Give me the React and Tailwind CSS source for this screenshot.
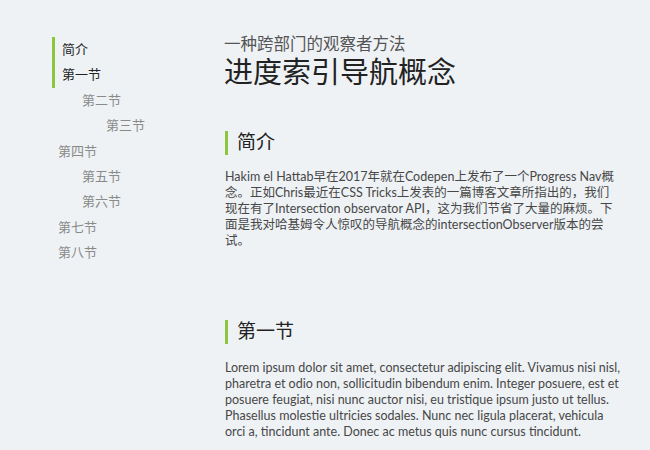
import React from 'react';

const navItems = [
  { label: '简介', level: 0, active: true },
  { label: '第一节', level: 0, active: true },
  { label: '第二节', level: 1 },
  { label: '第三节', level: 2 },
  { label: '第四节', level: 0 },
  { label: '第五节', level: 1 },
  { label: '第六节', level: 1 },
  { label: '第七节', level: 0 },
  { label: '第八节', level: 0 },
];

const introLines = [
  'Hakim el Hattab早在2017年就在Codepen上发布了一个Progress Nav概',
  '念。正如Chris最近在CSS Tricks上发表的一篇博客文章所指出的，我们',
  '现在有了Intersection observator API，这为我们节省了大量的麻烦。下',
  '面是我对哈基姆令人惊叹的导航概念的intersectionObserver版本的尝',
  '试。',
];

const loremLines = [
  'Lorem ipsum dolor sit amet, consectetur adipiscing elit. Vivamus nisi nisl,',
  'pharetra et odio non, sollicitudin bibendum enim. Integer posuere, est et',
  'posuere feugiat, nisi nunc auctor nisi, eu tristique ipsum justo ut tellus.',
  'Phasellus molestie ultricies sodales. Nunc nec ligula placerat, vehicula',
  'orci a, tincidunt ante. Donec ac metus quis nunc cursus tincidunt.',
];

const indent = ['pl-[6px]', 'pl-[30px]', 'pl-[54px]'];

function NavItem({ item }) {
  if (item.active) {
    return (
      <li className="h-[25.4px] leading-[25.4px] border-l-[3px] border-[#8cc63f] pl-[7px] text-[#222]">
        {item.label}
      </li>
    );
  }
  return (
    <li className={`h-[25.4px] leading-[25.4px] text-[#8a8a8a] ${indent[item.level]}`}>
      {item.label}
    </li>
  );
}

function Section({ title, lines, className, gap }) {
  return (
    <section className={className}>
      <h2 className="h-[24px] leading-[24px] border-l-[3px] border-[#8cc63f] pl-[9px] text-[19px] text-[#222] font-['Liberation_Serif','Noto_Sans_CJK_SC',serif]">
        {title}
      </h2>
      <p className={`${gap} text-[12.5px] leading-[16px] text-[#474747]`}>
        {lines.map((line, i) => (
          <span key={i} className="block whitespace-nowrap">
            {line}
          </span>
        ))}
      </p>
    </section>
  );
}

export default function App() {
  return (
    <div className="min-h-screen bg-[#eef2f5] flex pt-[36px] font-['Lato','Noto_Sans_CJK_SC',sans-serif]">
      <nav className="w-[224px] shrink-0 pl-[52px] pt-[1px]">
        <ul className="text-[13px]">
          {navItems.map((item) => (
            <NavItem key={item.label} item={item} />
          ))}
        </ul>
      </nav>
      <main className="flex-1">
        <header className="font-['Liberation_Serif','Noto_Sans_CJK_SC',serif]">
          <div className="text-[16.5px] leading-[18px] text-[#555]">一种跨部门的观察者方法</div>
          <h1 className="mt-[2px] text-[29px] leading-[34px] text-[#222]">进度索引导航概念</h1>
        </header>
        <Section title="简介" lines={introLines} gap="mt-[14px]" className="mt-[41px] ml-[1px]" />
        <Section title="第一节" lines={loremLines} gap="mt-[16px]" className="mt-[71px] ml-[1px]" />
      </main>
    </div>
  );
}
